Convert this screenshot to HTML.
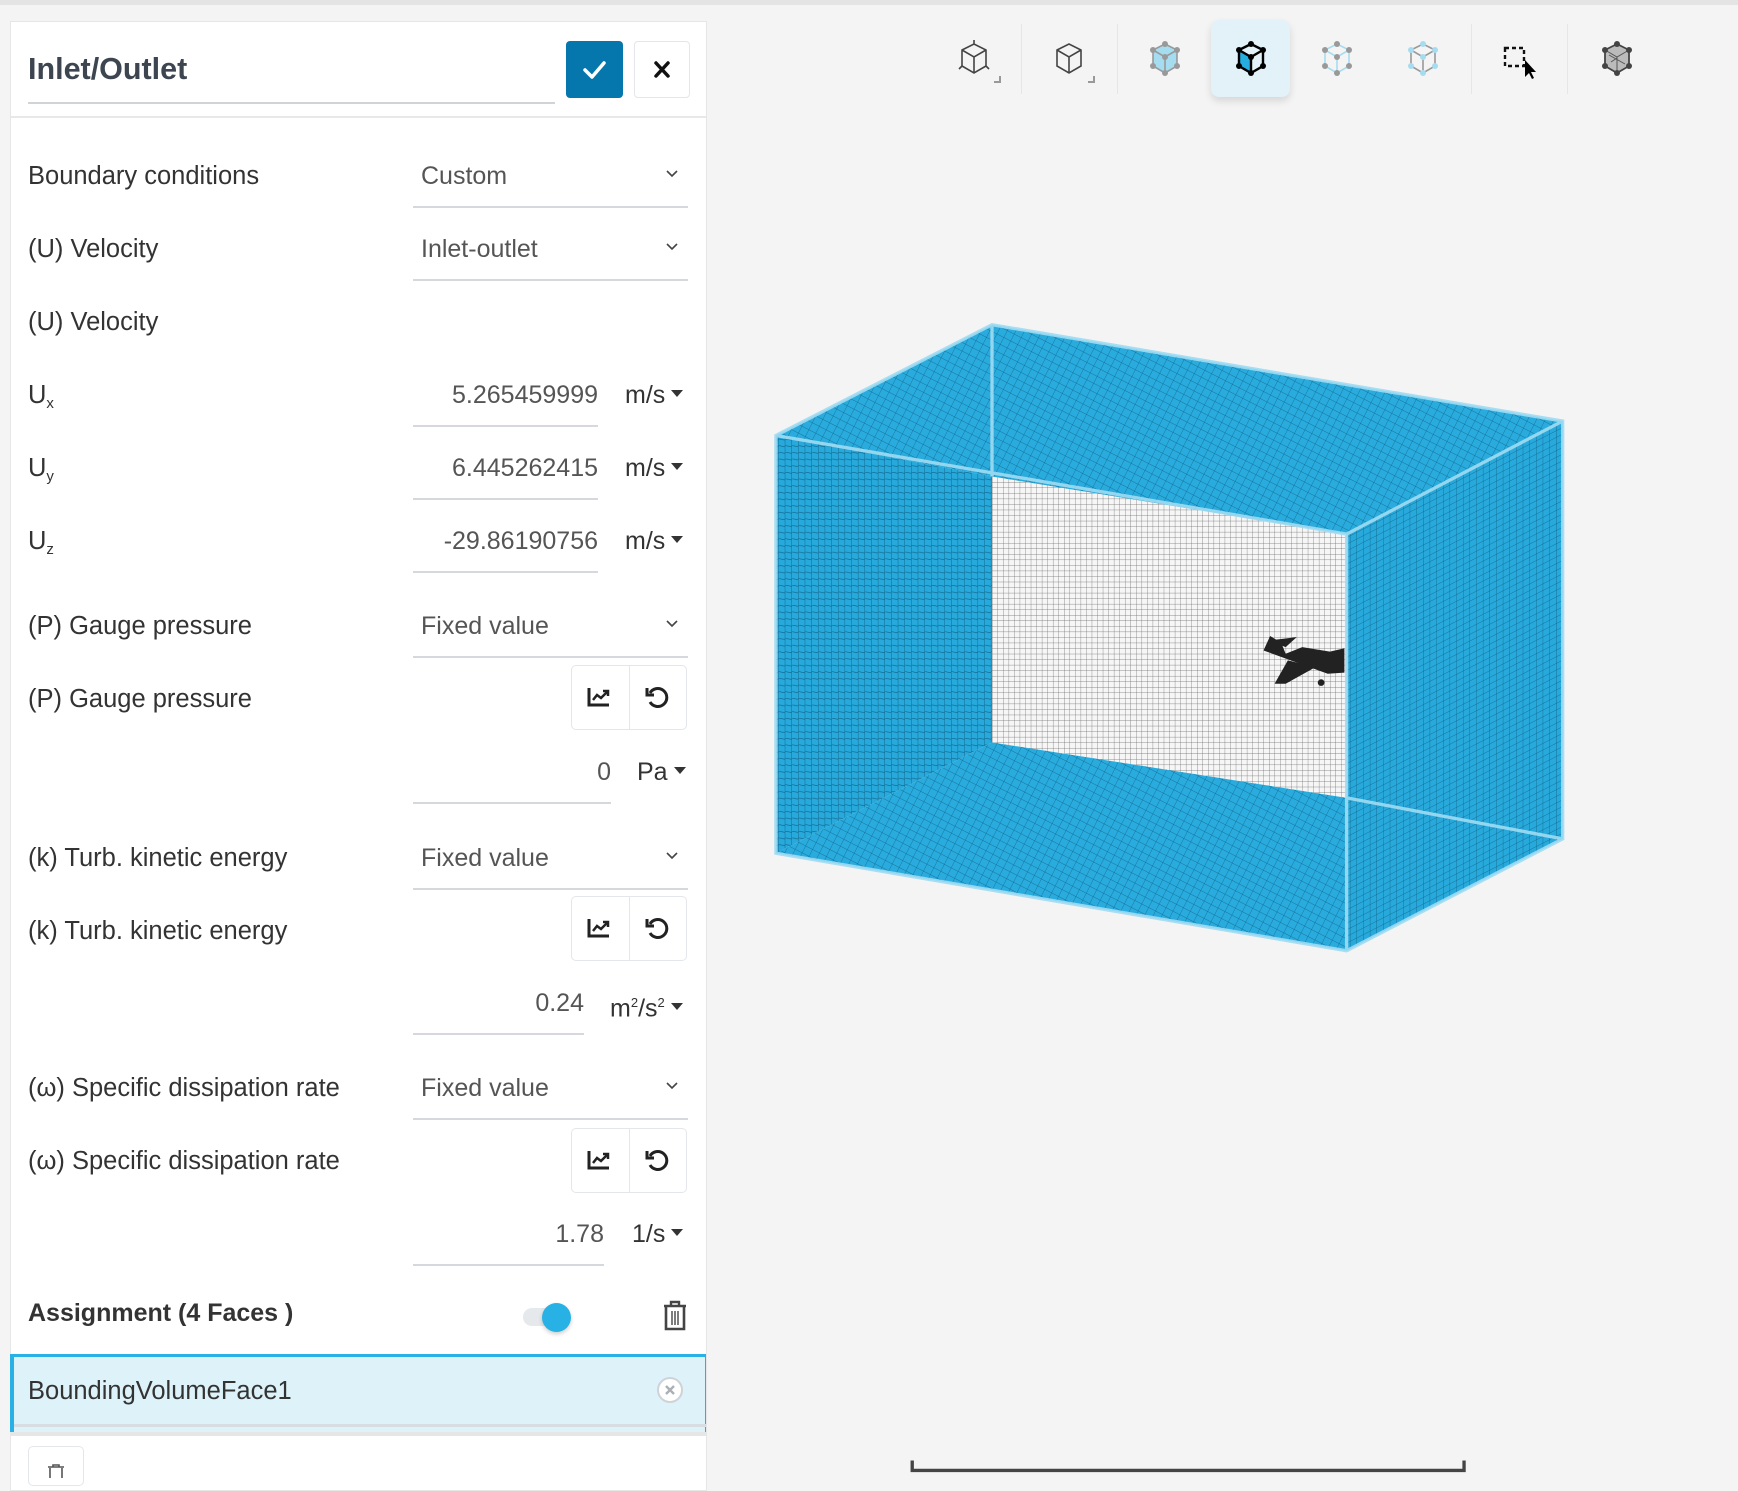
<!DOCTYPE html>
<html><head><meta charset="utf-8"><style>
*{box-sizing:border-box;margin:0;padding:0}
body{width:1738px;height:1476px;background:#f4f4f4;position:relative;overflow:hidden;font-family:"Liberation Sans",sans-serif;color:#333}
.a{position:absolute}
.topline{left:0;top:0;width:1738px;height:5px;background:#e4e4e4}
.panel{left:10px;top:21px;width:697px;height:1470px;background:#fff;border:1px solid #e6e6e6}
.lbl{position:absolute;left:28px;font-size:25.5px;color:#333;line-height:30px}
.sel{position:absolute;left:413px;width:275px;height:2px;background:#d5d9de}
.val{position:absolute;font-size:25px;color:#555;line-height:30px}
.chev{position:absolute;left:665px;width:14px;height:14px}
.caret{display:inline-block;width:0;height:0;border-left:6px solid transparent;border-right:6px solid transparent;border-top:7px solid #333;vertical-align:middle;margin-left:6px;position:relative;top:-3px}
.btns{position:absolute;left:571px;width:116px;height:65px;border:1px solid #e3e6ea;border-radius:5px}
.btns:after{content:"";position:absolute;left:57px;top:0;width:1px;height:100%;background:#e3e6ea}
sub{font-size:15px;vertical-align:-5px}
sup{font-size:13px}
</style></head><body>
<div class="a topline"></div>
<div class="a panel"></div>
<div class="a" style="left:28px;top:51px;font-size:30.5px;font-weight:bold;color:#3d4650;line-height:36px">Inlet/Outlet</div>
<div class="a" style="left:28px;top:102px;width:527px;height:2px;background:#d0d4d9"></div>
<div class="a" style="left:566px;top:41px;width:57px;height:57px;background:#0677ad;border-radius:4px">
<svg width="57" height="57" viewBox="0 0 57 57"><path d="M19 29 L26 36 L38 22" stroke="#fff" stroke-width="3.5" fill="none" stroke-linecap="round" stroke-linejoin="round"/></svg></div>
<div class="a" style="left:634px;top:41px;width:56px;height:57px;border:1px solid #e3e6ea;border-radius:4px">
<svg width="54" height="55" viewBox="0 0 54 55"><path d="M21 21 L33 34 M33 21 L21 34" stroke="#111" stroke-width="3.5" stroke-linecap="round"/></svg></div>
<div class="a" style="left:11px;top:116px;width:695px;height:2px;background:#e8e8e8"></div>

<div class="lbl" style="top:161px">Boundary conditions</div>
<div class="val" style="left:421px;top:161px">Custom</div>
<svg class="chev" style="top:167px" viewBox="0 0 14 14"><path d="M2 4 L7 9 L12 4" stroke="#444" stroke-width="1.6" fill="none"/></svg>
<div class="sel" style="top:206px"></div>

<div class="lbl" style="top:234px">(U) Velocity</div>
<div class="val" style="left:421px;top:234px">Inlet-outlet</div>
<svg class="chev" style="top:240px" viewBox="0 0 14 14"><path d="M2 4 L7 9 L12 4" stroke="#444" stroke-width="1.6" fill="none"/></svg>
<div class="sel" style="top:279px"></div>

<div class="lbl" style="top:307px">(U) Velocity</div>

<div class="lbl" style="top:380px">U<sub>x</sub></div>
<div class="val" style="left:413px;width:185px;text-align:right;top:380px">5.265459999</div>
<div class="val" style="left:625px;top:380px;color:#333">m/s<span class="caret"></span></div>
<div class="sel" style="top:425px;width:185px"></div>

<div class="lbl" style="top:453px">U<sub>y</sub></div>
<div class="val" style="left:413px;width:185px;text-align:right;top:453px">6.445262415</div>
<div class="val" style="left:625px;top:453px;color:#333">m/s<span class="caret"></span></div>
<div class="sel" style="top:498px;width:185px"></div>

<div class="lbl" style="top:526px">U<sub>z</sub></div>
<div class="val" style="left:413px;width:185px;text-align:right;top:526px">-29.86190756</div>
<div class="val" style="left:625px;top:526px;color:#333">m/s<span class="caret"></span></div>
<div class="sel" style="top:571px;width:185px"></div>

<div class="lbl" style="top:611px">(P) Gauge pressure</div>
<div class="val" style="left:421px;top:611px">Fixed value</div>
<svg class="chev" style="top:617px" viewBox="0 0 14 14"><path d="M2 4 L7 9 L12 4" stroke="#444" stroke-width="1.6" fill="none"/></svg>
<div class="sel" style="top:656px"></div>

<div class="lbl" style="top:684px">(P) Gauge pressure</div>
<div class="btns" style="top:665px"></div>
<svg class="a" style="left:586px;top:685px" width="26" height="24" viewBox="0 0 26 24"><path d="M3 3 V20 H23" stroke="#222" stroke-width="3" fill="none"/><path d="M7 15 L11 10 L15 13 L21 7" stroke="#222" stroke-width="2.5" fill="none"/><path d="M17 6 H22 V11" stroke="#222" stroke-width="2.5" fill="none"/></svg>
<svg class="a" style="left:644px;top:684px" width="26" height="26" viewBox="0 0 26 26"><path d="M6 9 A9 9 0 1 1 6 18" stroke="#222" stroke-width="3" fill="none"/><path d="M3 4 V11 H10" stroke="#222" stroke-width="3" fill="none"/></svg>
<div class="val" style="left:413px;width:198px;text-align:right;top:757px">0</div>
<div class="val" style="left:637px;top:757px;color:#333">Pa<span class="caret"></span></div>
<div class="sel" style="top:802px;width:198px"></div>

<div class="lbl" style="top:843px">(k) Turb. kinetic energy</div>
<div class="val" style="left:421px;top:843px">Fixed value</div>
<svg class="chev" style="top:849px" viewBox="0 0 14 14"><path d="M2 4 L7 9 L12 4" stroke="#444" stroke-width="1.6" fill="none"/></svg>
<div class="sel" style="top:888px"></div>

<div class="lbl" style="top:916px">(k) Turb. kinetic energy</div>
<div class="btns" style="top:896px"></div>
<svg class="a" style="left:586px;top:916px" width="26" height="24" viewBox="0 0 26 24"><path d="M3 3 V20 H23" stroke="#222" stroke-width="3" fill="none"/><path d="M7 15 L11 10 L15 13 L21 7" stroke="#222" stroke-width="2.5" fill="none"/><path d="M17 6 H22 V11" stroke="#222" stroke-width="2.5" fill="none"/></svg>
<svg class="a" style="left:644px;top:915px" width="26" height="26" viewBox="0 0 26 26"><path d="M6 9 A9 9 0 1 1 6 18" stroke="#222" stroke-width="3" fill="none"/><path d="M3 4 V11 H10" stroke="#222" stroke-width="3" fill="none"/></svg>
<div class="val" style="left:413px;width:171px;text-align:right;top:988px">0.24</div>
<div class="val" style="left:610px;top:988px;color:#333">m<sup>2</sup>/s<sup>2</sup><span class="caret"></span></div>
<div class="sel" style="top:1033px;width:171px"></div>

<div class="lbl" style="top:1073px">(ω) Specific dissipation rate</div>
<div class="val" style="left:421px;top:1073px">Fixed value</div>
<svg class="chev" style="top:1079px" viewBox="0 0 14 14"><path d="M2 4 L7 9 L12 4" stroke="#444" stroke-width="1.6" fill="none"/></svg>
<div class="sel" style="top:1118px"></div>

<div class="lbl" style="top:1146px">(ω) Specific dissipation rate</div>
<div class="btns" style="top:1128px"></div>
<svg class="a" style="left:586px;top:1148px" width="26" height="24" viewBox="0 0 26 24"><path d="M3 3 V20 H23" stroke="#222" stroke-width="3" fill="none"/><path d="M7 15 L11 10 L15 13 L21 7" stroke="#222" stroke-width="2.5" fill="none"/><path d="M17 6 H22 V11" stroke="#222" stroke-width="2.5" fill="none"/></svg>
<svg class="a" style="left:644px;top:1147px" width="26" height="26" viewBox="0 0 26 26"><path d="M6 9 A9 9 0 1 1 6 18" stroke="#222" stroke-width="3" fill="none"/><path d="M3 4 V11 H10" stroke="#222" stroke-width="3" fill="none"/></svg>
<div class="val" style="left:413px;width:191px;text-align:right;top:1219px">1.78</div>
<div class="val" style="left:632px;top:1219px;color:#333">1/s<span class="caret"></span></div>
<div class="sel" style="top:1264px;width:191px"></div>

<div class="lbl" style="top:1298px;font-weight:bold;font-size:25px">Assignment (4 Faces )</div>
<div class="a" style="left:523px;top:1308px;width:38px;height:18px;border-radius:9px;background:#e6e9ec"></div>
<div class="a" style="left:542px;top:1303px;width:29px;height:29px;border-radius:50%;background:#27b1e4;box-shadow:0 2px 4px rgba(0,0,0,.2)"></div>
<svg class="a" style="left:662px;top:1300px" width="26" height="32" viewBox="0 0 26 32"><path d="M2 6 H24 M9 6 V2 H17 V6" stroke="#444" stroke-width="2.4" fill="none"/><path d="M4 7 V29 H22 V7" stroke="#444" stroke-width="2.6" fill="none"/><path d="M10 11 V25 M13 11 V25 M16 11 V25" stroke="#444" stroke-width="1.4"/></svg>

<div class="a" style="left:10px;top:1354px;width:696px;height:79px;background:#ddf2f9;border-top:3px solid #27b1e4;border-left:4px solid #27b1e4;border-right:1px solid #27b1e4"></div>
<div class="a" style="left:14px;top:1424px;width:692px;height:3px;background:#d7dde3"></div>
<div class="lbl" style="top:1376px">BoundingVolumeFace1</div>
<svg class="a" style="left:656px;top:1376px" width="28" height="28" viewBox="0 0 28 28"><circle cx="14" cy="14" r="12" fill="#fff" stroke="#cfd3d7" stroke-width="2"/><path d="M10 10 L18 18 M18 10 L10 18" stroke="#aab0b6" stroke-width="2.4"/></svg>
<div class="a" style="left:10px;top:1432px;width:697px;height:4px;background:#e6e6e6"></div>
<div class="a" style="left:28px;top:1446px;width:56px;height:40px;border:1px solid #e3e6ea;border-radius:5px;background:#fff"></div>
<svg class="a" style="left:46px;top:1464px" width="20" height="14" viewBox="0 0 20 14"><path d="M2 3 H18 M7 3 V1 H13 V3 M4 4 V14 M16 4 V14" stroke="#555" stroke-width="1.6" fill="none"/></svg>

<div class="a" style="left:1211px;top:20px;width:79px;height:77px;background:#e3f1f9;border-radius:8px;box-shadow:0 4px 8px rgba(0,0,0,.12)"></div>
<div class="a" style="left:1021px;top:24px;width:1px;height:70px;background:#e6e6e6"></div>
<div class="a" style="left:1117px;top:24px;width:1px;height:70px;background:#e6e6e6"></div>
<div class="a" style="left:1471px;top:24px;width:1px;height:70px;background:#e6e6e6"></div>
<div class="a" style="left:1567px;top:24px;width:1px;height:70px;background:#e6e6e6"></div>
<svg class="a" style="left:0;top:0" width="1738" height="120" viewBox="0 0 1738 120">
<g fill="none" stroke="#444" stroke-width="1.6">
<path d="M962 50 L974 44 L986 50 L986 66 L974 73 L962 66 Z M962 50 L974 57 L986 50 M974 57 V73 M974 44 V40 M962 66 L959 69 M986 66 L989 69"/>
<path d="M994 82 H1000 V76" stroke="#999" stroke-width="2"/>
<path d="M1057 50 L1069 44 L1081 50 L1081 66 L1069 73 L1057 66 Z M1057 50 L1069 57 L1081 50 M1069 57 V73"/>
<path d="M1088 82 H1094 V76" stroke="#999" stroke-width="2"/>
</g>
<g>
<path d="M1153 50 L1165 44 L1177 50 L1177 66 L1165 73 L1153 66 Z" fill="#a6dcef" stroke="#999" stroke-width="1.6"/>
<path d="M1153 50 L1165 57 L1177 50 M1165 57 V73" stroke="#999" stroke-width="1.6" fill="none"/>
<g fill="#999"><circle cx="1165" cy="44" r="3"/><circle cx="1153" cy="50" r="3"/><circle cx="1177" cy="50" r="3"/><circle cx="1165" cy="57" r="3"/><circle cx="1153" cy="66" r="3"/><circle cx="1177" cy="66" r="3"/><circle cx="1165" cy="73" r="3"/></g>
</g>
<g>
<path d="M1239 50 L1251 57 V73 L1239 66 Z" fill="#27aee0"/>
<path d="M1239 50 L1251 44 L1263 50 L1263 66 L1251 73 L1239 66 Z M1239 50 L1251 57 L1263 50 M1251 57 V73" fill="none" stroke="#000" stroke-width="2.4"/>
<g fill="#000"><circle cx="1251" cy="44" r="3"/><circle cx="1239" cy="50" r="3"/><circle cx="1263" cy="50" r="3"/><circle cx="1251" cy="57" r="3"/><circle cx="1239" cy="66" r="3"/><circle cx="1263" cy="66" r="3"/><circle cx="1251" cy="73" r="3"/></g>
</g>
<g>
<path d="M1325 50 L1337 44 L1349 50 L1349 66 L1337 73 L1325 66 Z M1325 50 L1337 57 L1349 50 M1337 57 V73" fill="none" stroke="#a6dcef" stroke-width="1.6"/>
<g fill="#999"><circle cx="1337" cy="44" r="3"/><circle cx="1325" cy="50" r="3"/><circle cx="1349" cy="50" r="3"/><circle cx="1337" cy="57" r="3"/><circle cx="1325" cy="66" r="3"/><circle cx="1349" cy="66" r="3"/><circle cx="1337" cy="73" r="3"/></g>
</g>
<g>
<path d="M1411 50 L1423 44 L1435 50 L1435 66 L1423 73 L1411 66 Z M1411 50 L1423 57 L1435 50 M1423 57 V73" fill="none" stroke="#999" stroke-width="1.6"/>
<g fill="#a6dcef"><circle cx="1423" cy="44" r="3"/><circle cx="1411" cy="50" r="3"/><circle cx="1435" cy="50" r="3"/><circle cx="1423" cy="57" r="3"/><circle cx="1411" cy="66" r="3"/><circle cx="1435" cy="66" r="3"/><circle cx="1423" cy="73" r="3"/></g>
</g>
<rect x="1505" y="48" width="19" height="18" fill="none" stroke="#111" stroke-width="2.4" stroke-dasharray="4 3"/>
<path d="M1525 60 L1525 77 L1529 73 L1532 79 L1534 78 L1531 72 L1536 72 Z" fill="#000"/>
<g>
<path d="M1605 50 L1617 44 L1629 50 L1629 66 L1617 73 L1605 66 Z" fill="#bbb" stroke="#444" stroke-width="1.8"/>
<path d="M1605 50 L1617 57 L1629 50 M1617 57 V73 M1609 55 L1625 64 M1611 62 L1617 58" stroke="#555" stroke-width="1" fill="none"/>
<g fill="#444"><circle cx="1617" cy="44" r="3"/><circle cx="1605" cy="50" r="3"/><circle cx="1629" cy="50" r="3"/><circle cx="1605" cy="66" r="3"/><circle cx="1629" cy="66" r="3"/><circle cx="1617" cy="73" r="3"/></g>
</g>
</svg>

<svg class="a" style="left:0;top:0" width="1738" height="1476" viewBox="0 0 1568 1332">
<defs>
<pattern id="g1" width="5" height="5" patternUnits="userSpaceOnUse"><rect width="5" height="5" fill="#f6f6f6"/><path d="M0 0 H5 M0 0 V5" stroke="#666" stroke-width="0.6"/></pattern>
<pattern id="g2" width="6" height="6" patternUnits="userSpaceOnUse"><rect width="6" height="6" fill="#27a9dc"/><path d="M0 0 V6" stroke="#0c5a7c" stroke-width="0.7"/><path d="M0 0 L6 1.1" stroke="#0c5a7c" stroke-width="0.5"/></pattern>
<pattern id="g3" width="7" height="7" patternUnits="userSpaceOnUse" patternTransform="rotate(27)"><rect width="7" height="7" fill="#29abdd"/><path d="M0 0 H7 M0 0 V7" stroke="#0e6286" stroke-width="0.6"/></pattern>
<pattern id="g4" width="6" height="6" patternUnits="userSpaceOnUse" patternTransform="skewY(-27)"><rect width="6" height="6" fill="#27a9dc"/><path d="M0 0 H6 M0 0 V6" stroke="#0c5a7c" stroke-width="0.6"/></pattern>
</defs>
<polygon points="895,430 1215,482 1215,720 895,670" fill="url(#g1)"/>
<polygon points="700,393 895,430 895,670 700,770" fill="url(#g2)"/>
<polygon points="700,770 895,670 1215,720 1215,858" fill="url(#g3)"/>
<polygon points="700,393 895,293 1410,380 1215,482 895,430" fill="url(#g3)"/>
<polygon points="1215,482 1410,380 1410,757 1215,858" fill="url(#g4)"/>
<g stroke="#9fdcf3" stroke-width="3" fill="none" opacity="0.9">
<path d="M700,393 L895,293 L1410,380 L1410,757 L1215,858 L700,770 Z"/>
<path d="M700,393 L1215,482 L1410,380 M1215,482 V858 M895,293 V430 M1215,720 L1410,757"/>
</g>
<g fill="#222">
<path d="M1140 587 L1146 574 L1156 580 L1160 590 L1175 584 L1200 588 L1213 585 L1213 607 L1198 608 Z"/>
<path d="M1162 596 L1187 602 L1160 617 L1150 617 Z"/>
<path d="M1145 578 L1170 575 L1160 584 Z"/>
<circle cx="1192" cy="616" r="3"/>
</g>
<path d="M823 1318 V1327 H1321 V1318" stroke="#444" stroke-width="3" fill="none"/>
</svg>
</body></html>
